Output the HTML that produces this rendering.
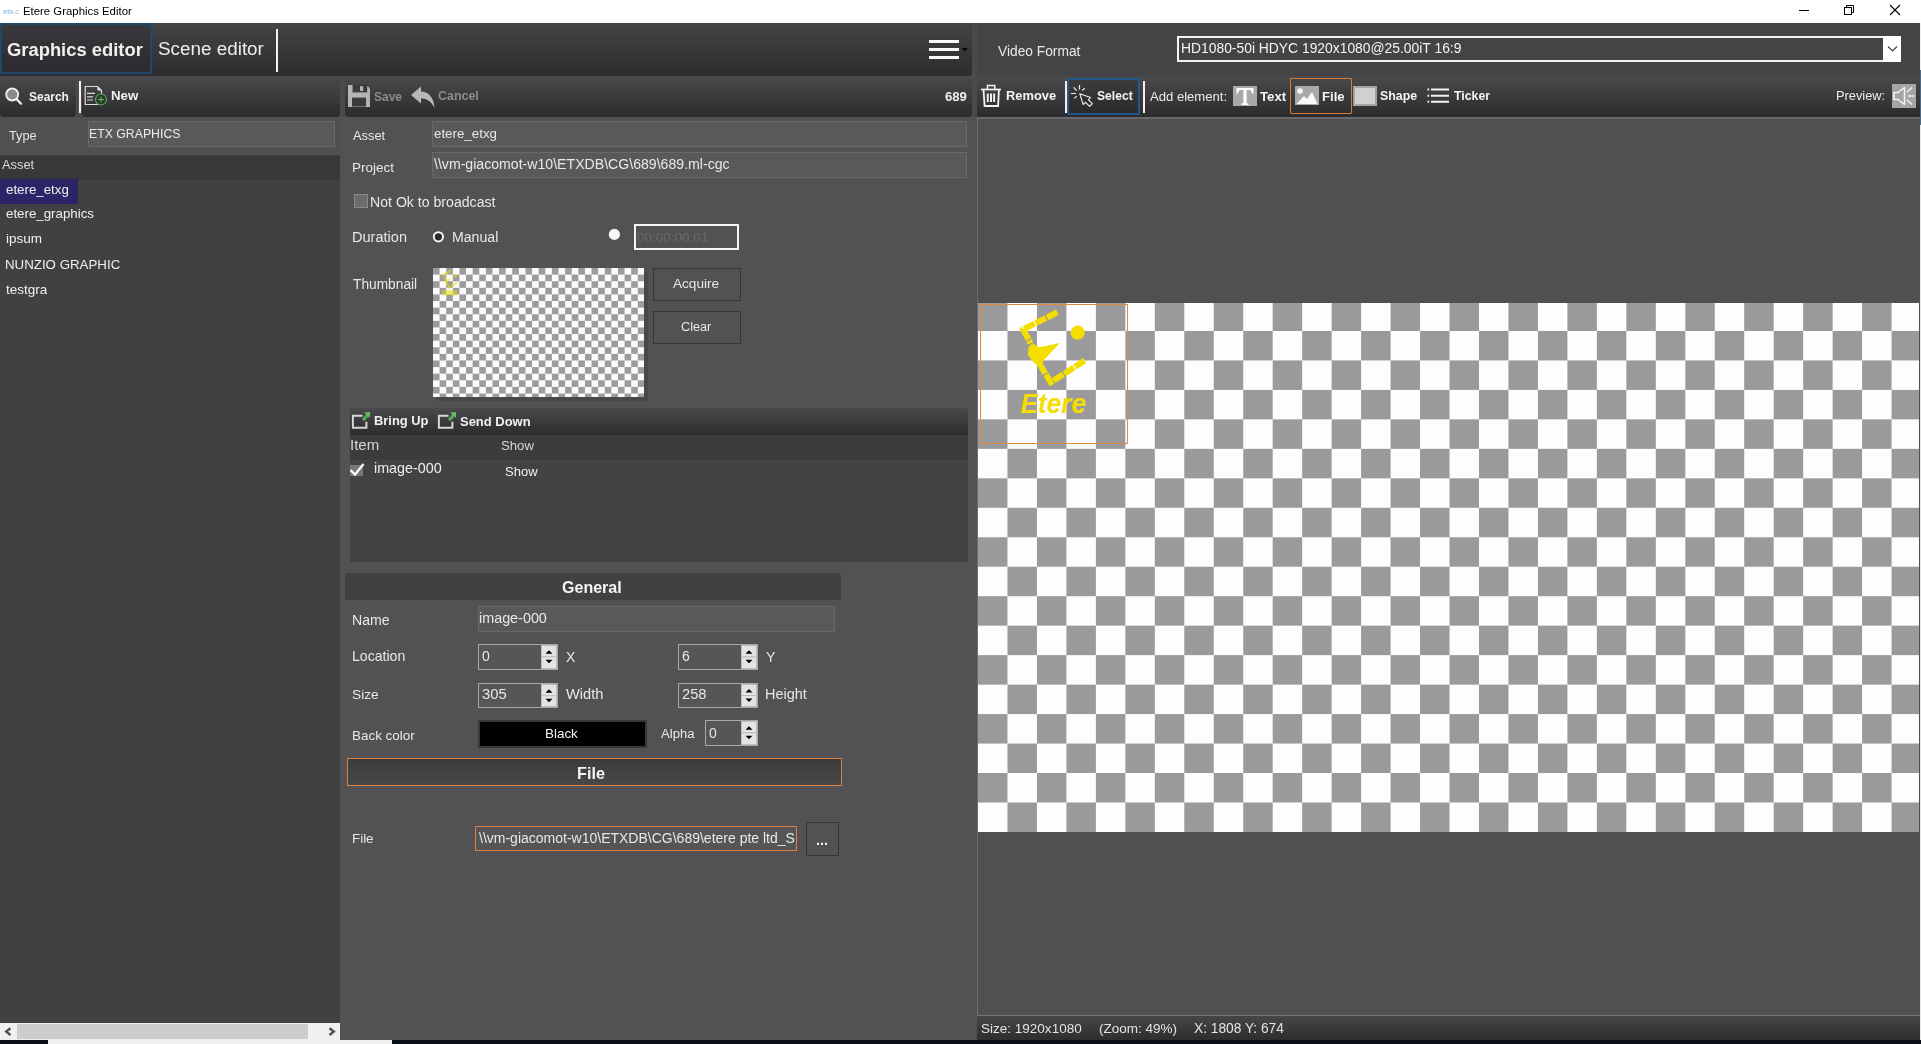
<!DOCTYPE html>
<html><head><meta charset="utf-8"><title>Etere Graphics Editor</title>
<style>
html,body{margin:0;padding:0}
body{width:1921px;height:1044px;position:relative;overflow:hidden;background:#4a494c;font-family:"Liberation Sans",sans-serif}
div,span,svg{position:absolute}
span{white-space:pre;line-height:1;will-change:transform}
</style></head><body>
<div style="left:0px;top:0px;width:1921px;height:23px;background:#ffffff"></div><svg style="position:absolute;left:0;top:0" width="1921" height="23"><text x="3" y="14" font-family="Liberation Sans" font-size="7" font-weight="bold" fill="#5ab0e0" opacity="0.7">etx</text><text x="13" y="14" font-family="Liberation Sans" font-size="7" fill="#a08aa0" opacity="0.6">-c</text><line x1="1799" y1="10.5" x2="1809" y2="10.5" stroke="#000" stroke-width="1"/><rect x="1844.5" y="7.5" width="7" height="7" fill="none" stroke="#000" stroke-width="1"/><path d="M1846.5 7.5 V5.5 H1853.5 V12.5 H1851.5" fill="none" stroke="#000" stroke-width="1"/><path d="M1890 5 L1900 15 M1900 5 L1890 15" stroke="#000" stroke-width="1.1"/></svg><div style="left:0px;top:23px;width:1921px;height:1017px;background:#4a494c"></div><div style="left:0px;top:23px;width:972px;height:53px;background:linear-gradient(#444346,#2c2b2e);border-radius:0 0 4px 0"></div><div style="left:0px;top:23px;width:152px;height:51px;box-sizing:border-box;border:2px solid #204868;background:linear-gradient(#39383b,#2b2a2e)"></div><div style="left:276px;top:29px;width:2px;height:43px;background:#f2f2f2"></div><div style="left:929px;top:39.5px;width:30px;height:3.0px;background:#fafafa;border-radius:0.5px"></div><div style="left:929px;top:47.5px;width:30px;height:3.0px;background:#fafafa;border-radius:0.5px"></div><div style="left:929px;top:55.5px;width:30px;height:3.0px;background:#fafafa;border-radius:0.5px"></div><svg style="left:960px;top:45px" width="10" height="8"><path d="M2 3 L7.6 3 L4.8 6.6 Z" fill="#000"/></svg><div style="left:977px;top:23px;width:943px;height:53px;background:#444346"></div><div style="left:1177px;top:36.2px;width:724px;height:26.199999999999996px;box-sizing:border-box;border:2px solid #f4f4f4;background:#444346"></div><div style="left:1883px;top:36.2px;width:18px;height:26.199999999999996px;background:#ffffff"></div><svg style="position:absolute;left:1886px;top:44px" width="14" height="10"><path d="M2 2.5 L6.5 7 L11 2.5" fill="none" stroke="#444" stroke-width="1.2"/></svg><div style="left:0px;top:76px;width:76px;height:41px;background:linear-gradient(#4a494c,#2c2b2e);border-radius:0 0 4px 4px"></div><div style="left:82px;top:76px;width:258px;height:41px;background:linear-gradient(#4a494c,#2c2b2e);border-radius:0 0 4px 4px"></div><div style="left:79px;top:81px;width:2px;height:32px;background:#f4f4f4"></div><div style="left:345px;top:76px;width:627px;height:41px;background:linear-gradient(#4a494c,#2c2b2e);border-radius:0 0 4px 4px"></div><div style="left:977px;top:76px;width:943px;height:41px;background:linear-gradient(#4a494c,#2c2b2e);"></div><svg style="position:absolute;left:0;top:76px" width="80" height="41"><circle cx="12.2" cy="18.5" r="6" fill="#8a898c" stroke="#f0f0f0" stroke-width="1.8"/><path d="M16.5 23 L21 27.8" stroke="#f0f0f0" stroke-width="2.2" stroke-linecap="round"/></svg><svg style="position:absolute;left:80px;top:76px" width="40" height="41"><path d="M5.2 10.5 H17.5 L21.5 14.5 V28.5 H5.2 Z" fill="none" stroke="#dcdcdc" stroke-width="1.2"/><path d="M17.5 10.5 V14.5 H21.5 Z" fill="#e8e8e8"/><path d="M7 17.3 H15 M7 20.8 H13 M7 24 H13" stroke="#dcdcdc" stroke-width="1.2"/><circle cx="21" cy="23.5" r="5.5" fill="#2c3a2c" stroke="#5aa05a" stroke-width="1.2"/><path d="M21 20.5 V26.5 M18 23.5 H24" stroke="#6ab06a" stroke-width="1"/></svg><svg style="position:absolute;left:345px;top:76px" width="140" height="41"><path d="M3 9 H21.5 L25 12.5 V31 H3 Z" fill="#b4b3b6"/><rect x="7.6" y="9" width="14.6" height="7.4" fill="#3a393c"/><rect x="15" y="10.2" width="3.2" height="4.8" fill="#b4b3b6"/><rect x="7" y="21.6" width="14" height="8.9" fill="#3a393c"/><path d="M66 19 L76 10.5 V15.5 C83 15.5 89 21 89.5 32 C86 25 82 22.5 76 22.5 V27.5 Z" fill="#b8b7ba"/></svg><svg style="left:977px;top:76px" width="30" height="41"><path d="M3.9 13.5 H24" stroke="#f4f4f4" stroke-width="1.7"/><path d="M10.5 13.5 V9.5 H17.7 V13.5" fill="none" stroke="#f4f4f4" stroke-width="1.5"/><path d="M6.5 13.5 L7.6 30 H21.1 L21.9 13.5" fill="none" stroke="#f4f4f4" stroke-width="1.8"/><path d="M10.8 17.5 V26.1 M14 17.5 V26.1 M17.1 17.5 V26.1" stroke="#f0f0f0" stroke-width="2"/></svg><div style="left:1067px;top:78px;width:73px;height:37px;box-sizing:border-box;border:2px solid #26578a;background:linear-gradient(#3c3b3e,#2a292c);border-radius:2px"></div><div style="left:1065px;top:81px;width:2px;height:32px;background:#f0f0f0"></div><div style="left:1143px;top:81px;width:2px;height:32px;background:#f0f0f0"></div><svg style="position:absolute;left:1067px;top:76px" width="32" height="41"><path d="M12.8 17.8 L23.5 21.5 L21.4 23.9 L25.4 27.6 L22.6 30.4 L18.6 26.4 L16.2 28.5 Z" fill="none" stroke="#f2f2f2" stroke-width="1.1" stroke-linejoin="round"/><path d="M12.5 8.9 V13.5 M6.7 11.4 L9.7 14.6 M3.9 17.5 H8.8 M7.3 22.4 L9.7 20.1 M17.7 12.1 L15.3 14.6" stroke="#f2f2f2" stroke-width="1.2"/></svg><div style="left:1233px;top:86px;width:24px;height:20px;background:#a9a8ab"></div><svg style="position:absolute;left:1233px;top:86px" width="24" height="20"><path d="M3.5 2 H20.5 V7.5 H19 C18.5 5 17.8 4 15.5 4 H13.6 V16.3 C13.6 17.3 14 17.6 15.5 17.6 V19 H8.5 V17.6 C10 17.6 10.4 17.3 10.4 16.3 V4 H8.5 C6.2 4 5.5 5 5 7.5 H3.5 Z" fill="#ffffff"/></svg><div style="left:1289.5px;top:78px;width:62.5px;height:36px;box-sizing:border-box;border:1.5px solid #d87a30;border-radius:1px"></div><div style="left:1295px;top:85.5px;width:24px;height:19.5px;background:#a9a8ab"></div><svg style="position:absolute;left:1295px;top:85.5px" width="24" height="20"><circle cx="5" cy="5" r="2.8" fill="#f4f4f4"/><path d="M1.5 18 L9 10 L12 13 L17 6 L22.5 18 Z" fill="#fafafa"/></svg><div style="left:1353px;top:86px;width:24px;height:20px;box-sizing:border-box;background:#d0d0d2;border:2px solid #a4a3a6"></div><svg style="position:absolute;left:1426px;top:86px" width="24" height="20"><path d="M1.5 3.6 H3.2 M1.5 9.7 H3.2 M1.5 15.8 H3.2" stroke="#f4f4f4" stroke-width="2"/><path d="M5 3.6 H23 M5 9.7 H23 M5 15.8 H23" stroke="#f4f4f4" stroke-width="2"/></svg><div style="left:1892px;top:83.7px;width:24px;height:24.299999999999997px;background:#a5a4a7"></div><svg style="position:absolute;left:1892px;top:83.7px" width="24" height="24.3"><path d="M2 8.5 H6 L12.5 3.5 V20.5 L6 15.5 H2 Z" fill="none" stroke="#f4f4f4" stroke-width="1.5" stroke-linejoin="round"/><path d="M15 8 L20 3.5 M16 12 H22.5 M15 16 L20 20.5" stroke="#f4f4f4" stroke-width="1.5"/></svg><div style="left:0px;top:117px;width:340px;height:38px;background:#504f52"></div><div style="left:87.5px;top:120.8px;width:247.5px;height:25.799999999999997px;box-sizing:border-box;background:#59585b;border:1px solid #69686b"></div><div style="left:0px;top:155px;width:340px;height:868px;background:#414043"></div><div style="left:0px;top:155.5px;width:340px;height:24.30000000000001px;background:#38373a"></div><div style="left:0px;top:179px;width:77.5px;height:24.5px;background:#2b2467"></div><div style="left:0px;top:1023px;width:340px;height:17px;background:#f0f0f0"></div><div style="left:17px;top:1024px;width:291px;height:15px;background:#cdcdcd"></div><svg style="position:absolute;left:0;top:1023px" width="340" height="17"><path d="M10.5 5.2 L6.2 8.6 L10.5 12" fill="none" stroke="#505050" stroke-width="2.4"/><path d="M329.5 5.2 L333.8 8.6 L329.5 12" fill="none" stroke="#505050" stroke-width="2.4"/></svg><div style="left:340px;top:117px;width:637px;height:923px;background:#525154"></div><div style="left:432px;top:121px;width:535px;height:26px;box-sizing:border-box;background:#59585b;border:1px solid #69686b"></div><div style="left:432px;top:152px;width:535px;height:26px;box-sizing:border-box;background:#59585b;border:1px solid #69686b"></div><div style="left:354px;top:194px;width:14px;height:14px;box-sizing:border-box;background:#6c6b6e;border:1px solid #8a898c"></div><svg style="position:absolute;left:425px;top:225px" width="200" height="25"><circle cx="13.4" cy="11.8" r="4.6" fill="#2a292c" stroke="#f4f4f4" stroke-width="2"/><circle cx="189.4" cy="9.4" r="5.6" fill="#f8f8f8"/></svg><div style="left:634px;top:224px;width:105px;height:26px;box-sizing:border-box;border:2px solid #f4f4f4;background:#525154"></div><div style="left:436px;top:272px;width:212px;height:129px;background:#48474a"></div><svg style="left:432.7px;top:268.1px;background:#fbfbfb" width="211.40000000000003" height="128.89999999999998"><g fill="#9c9b9e"><rect x="0.00" y="0.00" width="6.606" height="6.606"/><rect x="13.21" y="0.00" width="6.606" height="6.606"/><rect x="26.42" y="0.00" width="6.606" height="6.606"/><rect x="39.64" y="0.00" width="6.606" height="6.606"/><rect x="52.85" y="0.00" width="6.606" height="6.606"/><rect x="66.06" y="0.00" width="6.606" height="6.606"/><rect x="79.27" y="0.00" width="6.606" height="6.606"/><rect x="92.48" y="0.00" width="6.606" height="6.606"/><rect x="105.70" y="0.00" width="6.606" height="6.606"/><rect x="118.91" y="0.00" width="6.606" height="6.606"/><rect x="132.12" y="0.00" width="6.606" height="6.606"/><rect x="145.33" y="0.00" width="6.606" height="6.606"/><rect x="158.54" y="0.00" width="6.606" height="6.606"/><rect x="171.76" y="0.00" width="6.606" height="6.606"/><rect x="184.97" y="0.00" width="6.606" height="6.606"/><rect x="198.18" y="0.00" width="6.606" height="6.606"/><rect x="6.61" y="6.61" width="6.606" height="6.606"/><rect x="19.82" y="6.61" width="6.606" height="6.606"/><rect x="33.03" y="6.61" width="6.606" height="6.606"/><rect x="46.24" y="6.61" width="6.606" height="6.606"/><rect x="59.45" y="6.61" width="6.606" height="6.606"/><rect x="72.67" y="6.61" width="6.606" height="6.606"/><rect x="85.88" y="6.61" width="6.606" height="6.606"/><rect x="99.09" y="6.61" width="6.606" height="6.606"/><rect x="112.30" y="6.61" width="6.606" height="6.606"/><rect x="125.51" y="6.61" width="6.606" height="6.606"/><rect x="138.73" y="6.61" width="6.606" height="6.606"/><rect x="151.94" y="6.61" width="6.606" height="6.606"/><rect x="165.15" y="6.61" width="6.606" height="6.606"/><rect x="178.36" y="6.61" width="6.606" height="6.606"/><rect x="191.57" y="6.61" width="6.606" height="6.606"/><rect x="204.79" y="6.61" width="6.606" height="6.606"/><rect x="0.00" y="13.21" width="6.606" height="6.606"/><rect x="13.21" y="13.21" width="6.606" height="6.606"/><rect x="26.42" y="13.21" width="6.606" height="6.606"/><rect x="39.64" y="13.21" width="6.606" height="6.606"/><rect x="52.85" y="13.21" width="6.606" height="6.606"/><rect x="66.06" y="13.21" width="6.606" height="6.606"/><rect x="79.27" y="13.21" width="6.606" height="6.606"/><rect x="92.48" y="13.21" width="6.606" height="6.606"/><rect x="105.70" y="13.21" width="6.606" height="6.606"/><rect x="118.91" y="13.21" width="6.606" height="6.606"/><rect x="132.12" y="13.21" width="6.606" height="6.606"/><rect x="145.33" y="13.21" width="6.606" height="6.606"/><rect x="158.54" y="13.21" width="6.606" height="6.606"/><rect x="171.76" y="13.21" width="6.606" height="6.606"/><rect x="184.97" y="13.21" width="6.606" height="6.606"/><rect x="198.18" y="13.21" width="6.606" height="6.606"/><rect x="6.61" y="19.82" width="6.606" height="6.606"/><rect x="19.82" y="19.82" width="6.606" height="6.606"/><rect x="33.03" y="19.82" width="6.606" height="6.606"/><rect x="46.24" y="19.82" width="6.606" height="6.606"/><rect x="59.45" y="19.82" width="6.606" height="6.606"/><rect x="72.67" y="19.82" width="6.606" height="6.606"/><rect x="85.88" y="19.82" width="6.606" height="6.606"/><rect x="99.09" y="19.82" width="6.606" height="6.606"/><rect x="112.30" y="19.82" width="6.606" height="6.606"/><rect x="125.51" y="19.82" width="6.606" height="6.606"/><rect x="138.73" y="19.82" width="6.606" height="6.606"/><rect x="151.94" y="19.82" width="6.606" height="6.606"/><rect x="165.15" y="19.82" width="6.606" height="6.606"/><rect x="178.36" y="19.82" width="6.606" height="6.606"/><rect x="191.57" y="19.82" width="6.606" height="6.606"/><rect x="204.79" y="19.82" width="6.606" height="6.606"/><rect x="0.00" y="26.42" width="6.606" height="6.606"/><rect x="13.21" y="26.42" width="6.606" height="6.606"/><rect x="26.42" y="26.42" width="6.606" height="6.606"/><rect x="39.64" y="26.42" width="6.606" height="6.606"/><rect x="52.85" y="26.42" width="6.606" height="6.606"/><rect x="66.06" y="26.42" width="6.606" height="6.606"/><rect x="79.27" y="26.42" width="6.606" height="6.606"/><rect x="92.48" y="26.42" width="6.606" height="6.606"/><rect x="105.70" y="26.42" width="6.606" height="6.606"/><rect x="118.91" y="26.42" width="6.606" height="6.606"/><rect x="132.12" y="26.42" width="6.606" height="6.606"/><rect x="145.33" y="26.42" width="6.606" height="6.606"/><rect x="158.54" y="26.42" width="6.606" height="6.606"/><rect x="171.76" y="26.42" width="6.606" height="6.606"/><rect x="184.97" y="26.42" width="6.606" height="6.606"/><rect x="198.18" y="26.42" width="6.606" height="6.606"/><rect x="6.61" y="33.03" width="6.606" height="6.606"/><rect x="19.82" y="33.03" width="6.606" height="6.606"/><rect x="33.03" y="33.03" width="6.606" height="6.606"/><rect x="46.24" y="33.03" width="6.606" height="6.606"/><rect x="59.45" y="33.03" width="6.606" height="6.606"/><rect x="72.67" y="33.03" width="6.606" height="6.606"/><rect x="85.88" y="33.03" width="6.606" height="6.606"/><rect x="99.09" y="33.03" width="6.606" height="6.606"/><rect x="112.30" y="33.03" width="6.606" height="6.606"/><rect x="125.51" y="33.03" width="6.606" height="6.606"/><rect x="138.73" y="33.03" width="6.606" height="6.606"/><rect x="151.94" y="33.03" width="6.606" height="6.606"/><rect x="165.15" y="33.03" width="6.606" height="6.606"/><rect x="178.36" y="33.03" width="6.606" height="6.606"/><rect x="191.57" y="33.03" width="6.606" height="6.606"/><rect x="204.79" y="33.03" width="6.606" height="6.606"/><rect x="0.00" y="39.64" width="6.606" height="6.606"/><rect x="13.21" y="39.64" width="6.606" height="6.606"/><rect x="26.42" y="39.64" width="6.606" height="6.606"/><rect x="39.64" y="39.64" width="6.606" height="6.606"/><rect x="52.85" y="39.64" width="6.606" height="6.606"/><rect x="66.06" y="39.64" width="6.606" height="6.606"/><rect x="79.27" y="39.64" width="6.606" height="6.606"/><rect x="92.48" y="39.64" width="6.606" height="6.606"/><rect x="105.70" y="39.64" width="6.606" height="6.606"/><rect x="118.91" y="39.64" width="6.606" height="6.606"/><rect x="132.12" y="39.64" width="6.606" height="6.606"/><rect x="145.33" y="39.64" width="6.606" height="6.606"/><rect x="158.54" y="39.64" width="6.606" height="6.606"/><rect x="171.76" y="39.64" width="6.606" height="6.606"/><rect x="184.97" y="39.64" width="6.606" height="6.606"/><rect x="198.18" y="39.64" width="6.606" height="6.606"/><rect x="6.61" y="46.24" width="6.606" height="6.606"/><rect x="19.82" y="46.24" width="6.606" height="6.606"/><rect x="33.03" y="46.24" width="6.606" height="6.606"/><rect x="46.24" y="46.24" width="6.606" height="6.606"/><rect x="59.45" y="46.24" width="6.606" height="6.606"/><rect x="72.67" y="46.24" width="6.606" height="6.606"/><rect x="85.88" y="46.24" width="6.606" height="6.606"/><rect x="99.09" y="46.24" width="6.606" height="6.606"/><rect x="112.30" y="46.24" width="6.606" height="6.606"/><rect x="125.51" y="46.24" width="6.606" height="6.606"/><rect x="138.73" y="46.24" width="6.606" height="6.606"/><rect x="151.94" y="46.24" width="6.606" height="6.606"/><rect x="165.15" y="46.24" width="6.606" height="6.606"/><rect x="178.36" y="46.24" width="6.606" height="6.606"/><rect x="191.57" y="46.24" width="6.606" height="6.606"/><rect x="204.79" y="46.24" width="6.606" height="6.606"/><rect x="0.00" y="52.85" width="6.606" height="6.606"/><rect x="13.21" y="52.85" width="6.606" height="6.606"/><rect x="26.42" y="52.85" width="6.606" height="6.606"/><rect x="39.64" y="52.85" width="6.606" height="6.606"/><rect x="52.85" y="52.85" width="6.606" height="6.606"/><rect x="66.06" y="52.85" width="6.606" height="6.606"/><rect x="79.27" y="52.85" width="6.606" height="6.606"/><rect x="92.48" y="52.85" width="6.606" height="6.606"/><rect x="105.70" y="52.85" width="6.606" height="6.606"/><rect x="118.91" y="52.85" width="6.606" height="6.606"/><rect x="132.12" y="52.85" width="6.606" height="6.606"/><rect x="145.33" y="52.85" width="6.606" height="6.606"/><rect x="158.54" y="52.85" width="6.606" height="6.606"/><rect x="171.76" y="52.85" width="6.606" height="6.606"/><rect x="184.97" y="52.85" width="6.606" height="6.606"/><rect x="198.18" y="52.85" width="6.606" height="6.606"/><rect x="6.61" y="59.45" width="6.606" height="6.606"/><rect x="19.82" y="59.45" width="6.606" height="6.606"/><rect x="33.03" y="59.45" width="6.606" height="6.606"/><rect x="46.24" y="59.45" width="6.606" height="6.606"/><rect x="59.45" y="59.45" width="6.606" height="6.606"/><rect x="72.67" y="59.45" width="6.606" height="6.606"/><rect x="85.88" y="59.45" width="6.606" height="6.606"/><rect x="99.09" y="59.45" width="6.606" height="6.606"/><rect x="112.30" y="59.45" width="6.606" height="6.606"/><rect x="125.51" y="59.45" width="6.606" height="6.606"/><rect x="138.73" y="59.45" width="6.606" height="6.606"/><rect x="151.94" y="59.45" width="6.606" height="6.606"/><rect x="165.15" y="59.45" width="6.606" height="6.606"/><rect x="178.36" y="59.45" width="6.606" height="6.606"/><rect x="191.57" y="59.45" width="6.606" height="6.606"/><rect x="204.79" y="59.45" width="6.606" height="6.606"/><rect x="0.00" y="66.06" width="6.606" height="6.606"/><rect x="13.21" y="66.06" width="6.606" height="6.606"/><rect x="26.42" y="66.06" width="6.606" height="6.606"/><rect x="39.64" y="66.06" width="6.606" height="6.606"/><rect x="52.85" y="66.06" width="6.606" height="6.606"/><rect x="66.06" y="66.06" width="6.606" height="6.606"/><rect x="79.27" y="66.06" width="6.606" height="6.606"/><rect x="92.48" y="66.06" width="6.606" height="6.606"/><rect x="105.70" y="66.06" width="6.606" height="6.606"/><rect x="118.91" y="66.06" width="6.606" height="6.606"/><rect x="132.12" y="66.06" width="6.606" height="6.606"/><rect x="145.33" y="66.06" width="6.606" height="6.606"/><rect x="158.54" y="66.06" width="6.606" height="6.606"/><rect x="171.76" y="66.06" width="6.606" height="6.606"/><rect x="184.97" y="66.06" width="6.606" height="6.606"/><rect x="198.18" y="66.06" width="6.606" height="6.606"/><rect x="6.61" y="72.67" width="6.606" height="6.606"/><rect x="19.82" y="72.67" width="6.606" height="6.606"/><rect x="33.03" y="72.67" width="6.606" height="6.606"/><rect x="46.24" y="72.67" width="6.606" height="6.606"/><rect x="59.45" y="72.67" width="6.606" height="6.606"/><rect x="72.67" y="72.67" width="6.606" height="6.606"/><rect x="85.88" y="72.67" width="6.606" height="6.606"/><rect x="99.09" y="72.67" width="6.606" height="6.606"/><rect x="112.30" y="72.67" width="6.606" height="6.606"/><rect x="125.51" y="72.67" width="6.606" height="6.606"/><rect x="138.73" y="72.67" width="6.606" height="6.606"/><rect x="151.94" y="72.67" width="6.606" height="6.606"/><rect x="165.15" y="72.67" width="6.606" height="6.606"/><rect x="178.36" y="72.67" width="6.606" height="6.606"/><rect x="191.57" y="72.67" width="6.606" height="6.606"/><rect x="204.79" y="72.67" width="6.606" height="6.606"/><rect x="0.00" y="79.27" width="6.606" height="6.606"/><rect x="13.21" y="79.27" width="6.606" height="6.606"/><rect x="26.42" y="79.27" width="6.606" height="6.606"/><rect x="39.64" y="79.27" width="6.606" height="6.606"/><rect x="52.85" y="79.27" width="6.606" height="6.606"/><rect x="66.06" y="79.27" width="6.606" height="6.606"/><rect x="79.27" y="79.27" width="6.606" height="6.606"/><rect x="92.48" y="79.27" width="6.606" height="6.606"/><rect x="105.70" y="79.27" width="6.606" height="6.606"/><rect x="118.91" y="79.27" width="6.606" height="6.606"/><rect x="132.12" y="79.27" width="6.606" height="6.606"/><rect x="145.33" y="79.27" width="6.606" height="6.606"/><rect x="158.54" y="79.27" width="6.606" height="6.606"/><rect x="171.76" y="79.27" width="6.606" height="6.606"/><rect x="184.97" y="79.27" width="6.606" height="6.606"/><rect x="198.18" y="79.27" width="6.606" height="6.606"/><rect x="6.61" y="85.88" width="6.606" height="6.606"/><rect x="19.82" y="85.88" width="6.606" height="6.606"/><rect x="33.03" y="85.88" width="6.606" height="6.606"/><rect x="46.24" y="85.88" width="6.606" height="6.606"/><rect x="59.45" y="85.88" width="6.606" height="6.606"/><rect x="72.67" y="85.88" width="6.606" height="6.606"/><rect x="85.88" y="85.88" width="6.606" height="6.606"/><rect x="99.09" y="85.88" width="6.606" height="6.606"/><rect x="112.30" y="85.88" width="6.606" height="6.606"/><rect x="125.51" y="85.88" width="6.606" height="6.606"/><rect x="138.73" y="85.88" width="6.606" height="6.606"/><rect x="151.94" y="85.88" width="6.606" height="6.606"/><rect x="165.15" y="85.88" width="6.606" height="6.606"/><rect x="178.36" y="85.88" width="6.606" height="6.606"/><rect x="191.57" y="85.88" width="6.606" height="6.606"/><rect x="204.79" y="85.88" width="6.606" height="6.606"/><rect x="0.00" y="92.48" width="6.606" height="6.606"/><rect x="13.21" y="92.48" width="6.606" height="6.606"/><rect x="26.42" y="92.48" width="6.606" height="6.606"/><rect x="39.64" y="92.48" width="6.606" height="6.606"/><rect x="52.85" y="92.48" width="6.606" height="6.606"/><rect x="66.06" y="92.48" width="6.606" height="6.606"/><rect x="79.27" y="92.48" width="6.606" height="6.606"/><rect x="92.48" y="92.48" width="6.606" height="6.606"/><rect x="105.70" y="92.48" width="6.606" height="6.606"/><rect x="118.91" y="92.48" width="6.606" height="6.606"/><rect x="132.12" y="92.48" width="6.606" height="6.606"/><rect x="145.33" y="92.48" width="6.606" height="6.606"/><rect x="158.54" y="92.48" width="6.606" height="6.606"/><rect x="171.76" y="92.48" width="6.606" height="6.606"/><rect x="184.97" y="92.48" width="6.606" height="6.606"/><rect x="198.18" y="92.48" width="6.606" height="6.606"/><rect x="6.61" y="99.09" width="6.606" height="6.606"/><rect x="19.82" y="99.09" width="6.606" height="6.606"/><rect x="33.03" y="99.09" width="6.606" height="6.606"/><rect x="46.24" y="99.09" width="6.606" height="6.606"/><rect x="59.45" y="99.09" width="6.606" height="6.606"/><rect x="72.67" y="99.09" width="6.606" height="6.606"/><rect x="85.88" y="99.09" width="6.606" height="6.606"/><rect x="99.09" y="99.09" width="6.606" height="6.606"/><rect x="112.30" y="99.09" width="6.606" height="6.606"/><rect x="125.51" y="99.09" width="6.606" height="6.606"/><rect x="138.73" y="99.09" width="6.606" height="6.606"/><rect x="151.94" y="99.09" width="6.606" height="6.606"/><rect x="165.15" y="99.09" width="6.606" height="6.606"/><rect x="178.36" y="99.09" width="6.606" height="6.606"/><rect x="191.57" y="99.09" width="6.606" height="6.606"/><rect x="204.79" y="99.09" width="6.606" height="6.606"/><rect x="0.00" y="105.70" width="6.606" height="6.606"/><rect x="13.21" y="105.70" width="6.606" height="6.606"/><rect x="26.42" y="105.70" width="6.606" height="6.606"/><rect x="39.64" y="105.70" width="6.606" height="6.606"/><rect x="52.85" y="105.70" width="6.606" height="6.606"/><rect x="66.06" y="105.70" width="6.606" height="6.606"/><rect x="79.27" y="105.70" width="6.606" height="6.606"/><rect x="92.48" y="105.70" width="6.606" height="6.606"/><rect x="105.70" y="105.70" width="6.606" height="6.606"/><rect x="118.91" y="105.70" width="6.606" height="6.606"/><rect x="132.12" y="105.70" width="6.606" height="6.606"/><rect x="145.33" y="105.70" width="6.606" height="6.606"/><rect x="158.54" y="105.70" width="6.606" height="6.606"/><rect x="171.76" y="105.70" width="6.606" height="6.606"/><rect x="184.97" y="105.70" width="6.606" height="6.606"/><rect x="198.18" y="105.70" width="6.606" height="6.606"/><rect x="6.61" y="112.30" width="6.606" height="6.606"/><rect x="19.82" y="112.30" width="6.606" height="6.606"/><rect x="33.03" y="112.30" width="6.606" height="6.606"/><rect x="46.24" y="112.30" width="6.606" height="6.606"/><rect x="59.45" y="112.30" width="6.606" height="6.606"/><rect x="72.67" y="112.30" width="6.606" height="6.606"/><rect x="85.88" y="112.30" width="6.606" height="6.606"/><rect x="99.09" y="112.30" width="6.606" height="6.606"/><rect x="112.30" y="112.30" width="6.606" height="6.606"/><rect x="125.51" y="112.30" width="6.606" height="6.606"/><rect x="138.73" y="112.30" width="6.606" height="6.606"/><rect x="151.94" y="112.30" width="6.606" height="6.606"/><rect x="165.15" y="112.30" width="6.606" height="6.606"/><rect x="178.36" y="112.30" width="6.606" height="6.606"/><rect x="191.57" y="112.30" width="6.606" height="6.606"/><rect x="204.79" y="112.30" width="6.606" height="6.606"/><rect x="0.00" y="118.91" width="6.606" height="6.606"/><rect x="13.21" y="118.91" width="6.606" height="6.606"/><rect x="26.42" y="118.91" width="6.606" height="6.606"/><rect x="39.64" y="118.91" width="6.606" height="6.606"/><rect x="52.85" y="118.91" width="6.606" height="6.606"/><rect x="66.06" y="118.91" width="6.606" height="6.606"/><rect x="79.27" y="118.91" width="6.606" height="6.606"/><rect x="92.48" y="118.91" width="6.606" height="6.606"/><rect x="105.70" y="118.91" width="6.606" height="6.606"/><rect x="118.91" y="118.91" width="6.606" height="6.606"/><rect x="132.12" y="118.91" width="6.606" height="6.606"/><rect x="145.33" y="118.91" width="6.606" height="6.606"/><rect x="158.54" y="118.91" width="6.606" height="6.606"/><rect x="171.76" y="118.91" width="6.606" height="6.606"/><rect x="184.97" y="118.91" width="6.606" height="6.606"/><rect x="198.18" y="118.91" width="6.606" height="6.606"/><rect x="6.61" y="125.51" width="6.606" height="6.606"/><rect x="19.82" y="125.51" width="6.606" height="6.606"/><rect x="33.03" y="125.51" width="6.606" height="6.606"/><rect x="46.24" y="125.51" width="6.606" height="6.606"/><rect x="59.45" y="125.51" width="6.606" height="6.606"/><rect x="72.67" y="125.51" width="6.606" height="6.606"/><rect x="85.88" y="125.51" width="6.606" height="6.606"/><rect x="99.09" y="125.51" width="6.606" height="6.606"/><rect x="112.30" y="125.51" width="6.606" height="6.606"/><rect x="125.51" y="125.51" width="6.606" height="6.606"/><rect x="138.73" y="125.51" width="6.606" height="6.606"/><rect x="151.94" y="125.51" width="6.606" height="6.606"/><rect x="165.15" y="125.51" width="6.606" height="6.606"/><rect x="178.36" y="125.51" width="6.606" height="6.606"/><rect x="191.57" y="125.51" width="6.606" height="6.606"/><rect x="204.79" y="125.51" width="6.606" height="6.606"/></g></svg><svg style="left:432.7px;top:268.1px" width="40" height="40"><g opacity="0.55" transform="scale(0.2242,0.2434) translate(0,1.5)"><g fill="none" stroke="#e8e000" stroke-width="9"><path d="M79.3 9.3 L45.1 26.4 L52.5 40.3"/><path d="M61.4 60.6 L72.8 79.4 L107 57.4"/></g><path d="M50.4 44.3 L54.5 40.3 L61.4 44.3 L81.8 39.9 L65.5 57.4 L63.9 63.1 L56.5 60.6 L50 52.5 Z" fill="#e8e000"/><circle cx="99.7" cy="29.7" r="8" fill="#e8e000"/><rect x="42" y="90" width="66" height="21" fill="#e8e000"/></g></svg><div style="left:653px;top:267.5px;width:88px;height:33.0px;box-sizing:border-box;border:1px solid #363538;background:#525154"></div><div style="left:653px;top:310.5px;width:88px;height:33.0px;box-sizing:border-box;border:1px solid #363538;background:#525154"></div><div style="left:349.5px;top:408px;width:618.5px;height:26.5px;background:linear-gradient(#4a494c,#2c2b2e);border-radius:3px 3px 0 0"></div><svg style="left:349px;top:408px" width="110" height="27"><path d="M13.5 7.8 H3.9 V19.8 H17.4 V13.8" fill="none" stroke="#d6d6d6" stroke-width="2"/><path d="M14 12.2 L18.6 7.2" stroke="#55a855" stroke-width="3.2"/><path d="M15 4.6 L21.2 4 L20.8 10 Z" fill="#66bb66"/><path d="M99.5 7.8 H89.9 V19.8 H103.4 V13.8" fill="none" stroke="#d6d6d6" stroke-width="2"/><path d="M100 12.2 L104.6 7.2" stroke="#55a855" stroke-width="3.2"/><path d="M101 4.6 L107.2 4 L106.8 10 Z" fill="#66bb66"/></svg><div style="left:349.5px;top:434.5px;width:618.5px;height:127.5px;background:#434245"></div><div style="left:349.5px;top:434.5px;width:618.5px;height:25.5px;background:#3c3b3e"></div><div style="left:350px;top:465px;width:13px;height:11px;background:#77767a"></div><svg style="position:absolute;left:348px;top:460px" width="20" height="20"><path d="M2.5 10 L7 14.5 L15.5 4" fill="none" stroke="#ffffff" stroke-width="2.2"/></svg><div style="left:345px;top:572.5px;width:496px;height:27.5px;background:#414043;border-radius:3px 3px 0 0"></div><div style="left:478px;top:606px;width:357px;height:26px;box-sizing:border-box;background:#59585b;border:1px solid #69686b"></div><div style="left:478px;top:644.3px;width:80px;height:25.5px;box-sizing:border-box;background:#565558;border:1px solid #a9a8ab"></div><div style="left:541px;top:645.3px;width:16px;height:23.5px;box-sizing:border-box;background:#e4e4e4;border:1px solid #bcbcbc"></div><svg style="position:absolute;left:541px;top:644.3px" width="16" height="25.5"><path d="M4.5 9.75 L8 6.25 L11.5 9.75 Z" fill="#000"/><path d="M4.5 15.75 L8 19.25 L11.5 15.75 Z" fill="#000"/><path d="M1 12.75 H15" stroke="#b8b8b8" stroke-width="1"/></svg><div style="left:678px;top:644px;width:80px;height:25.700000000000045px;box-sizing:border-box;background:#565558;border:1px solid #a9a8ab"></div><div style="left:741px;top:645px;width:16px;height:23.700000000000045px;box-sizing:border-box;background:#e4e4e4;border:1px solid #bcbcbc"></div><svg style="position:absolute;left:741px;top:644px" width="16" height="25.700000000000045"><path d="M4.5 9.850000000000023 L8 6.350000000000023 L11.5 9.850000000000023 Z" fill="#000"/><path d="M4.5 15.850000000000023 L8 19.350000000000023 L11.5 15.850000000000023 Z" fill="#000"/><path d="M1 12.850000000000023 H15" stroke="#b8b8b8" stroke-width="1"/></svg><div style="left:478px;top:682.5px;width:80px;height:25.5px;box-sizing:border-box;background:#565558;border:1px solid #a9a8ab"></div><div style="left:541px;top:683.5px;width:16px;height:23.5px;box-sizing:border-box;background:#e4e4e4;border:1px solid #bcbcbc"></div><svg style="position:absolute;left:541px;top:682.5px" width="16" height="25.5"><path d="M4.5 9.75 L8 6.25 L11.5 9.75 Z" fill="#000"/><path d="M4.5 15.75 L8 19.25 L11.5 15.75 Z" fill="#000"/><path d="M1 12.75 H15" stroke="#b8b8b8" stroke-width="1"/></svg><div style="left:678px;top:682.5px;width:80px;height:25.0px;box-sizing:border-box;background:#565558;border:1px solid #a9a8ab"></div><div style="left:741px;top:683.5px;width:16px;height:23.0px;box-sizing:border-box;background:#e4e4e4;border:1px solid #bcbcbc"></div><svg style="position:absolute;left:741px;top:682.5px" width="16" height="25.0"><path d="M4.5 9.5 L8 6.0 L11.5 9.5 Z" fill="#000"/><path d="M4.5 15.5 L8 19.0 L11.5 15.5 Z" fill="#000"/><path d="M1 12.5 H15" stroke="#b8b8b8" stroke-width="1"/></svg><div style="left:478px;top:720.3px;width:168.70000000000005px;height:28.0px;box-sizing:border-box;background:#000;border:2.5px solid #38373a"></div><div style="left:705.3px;top:720.3px;width:52.700000000000045px;height:25.40000000000009px;box-sizing:border-box;background:#565558;border:1px solid #a9a8ab"></div><div style="left:741px;top:721.3px;width:16px;height:23.40000000000009px;box-sizing:border-box;background:#e4e4e4;border:1px solid #bcbcbc"></div><svg style="position:absolute;left:741px;top:720.3px" width="16" height="25.40000000000009"><path d="M4.5 9.700000000000045 L8 6.2000000000000455 L11.5 9.700000000000045 Z" fill="#000"/><path d="M4.5 15.700000000000045 L8 19.200000000000045 L11.5 15.700000000000045 Z" fill="#000"/><path d="M1 12.700000000000045 H15" stroke="#b8b8b8" stroke-width="1"/></svg><div style="left:347px;top:758.3px;width:495px;height:27.40000000000009px;box-sizing:border-box;border:1.5px solid #e07f3a;background:linear-gradient(#3c3b3e,#48474a)"></div><div style="left:474.8px;top:826.2px;width:322.2px;height:25.0px;box-sizing:border-box;border:1.5px solid #e0803c;background:#555457"></div><div style="left:806px;top:822.4px;width:33px;height:33.30000000000007px;box-sizing:border-box;border:1px solid #363538;background:#525154"></div><div style="left:977px;top:117px;width:943px;height:899px;background:#514f52"></div><div style="left:977px;top:117px;width:943px;height:1.5px;background:#69686b"></div><div style="left:977px;top:117px;width:1px;height:899px;background:#6c6b6e"></div><svg style="left:978px;top:303px;background:#fdfdff" width="941" height="529"><g fill="#9a999c"><rect x="0.00" y="-1.50" width="29.470" height="29.470"/><rect x="58.94" y="-1.50" width="29.470" height="29.470"/><rect x="117.88" y="-1.50" width="29.470" height="29.470"/><rect x="176.82" y="-1.50" width="29.470" height="29.470"/><rect x="235.76" y="-1.50" width="29.470" height="29.470"/><rect x="294.70" y="-1.50" width="29.470" height="29.470"/><rect x="353.64" y="-1.50" width="29.470" height="29.470"/><rect x="412.58" y="-1.50" width="29.470" height="29.470"/><rect x="471.52" y="-1.50" width="29.470" height="29.470"/><rect x="530.46" y="-1.50" width="29.470" height="29.470"/><rect x="589.40" y="-1.50" width="29.470" height="29.470"/><rect x="648.34" y="-1.50" width="29.470" height="29.470"/><rect x="707.28" y="-1.50" width="29.470" height="29.470"/><rect x="766.22" y="-1.50" width="29.470" height="29.470"/><rect x="825.16" y="-1.50" width="29.470" height="29.470"/><rect x="884.10" y="-1.50" width="29.470" height="29.470"/><rect x="29.47" y="27.97" width="29.470" height="29.470"/><rect x="88.41" y="27.97" width="29.470" height="29.470"/><rect x="147.35" y="27.97" width="29.470" height="29.470"/><rect x="206.29" y="27.97" width="29.470" height="29.470"/><rect x="265.23" y="27.97" width="29.470" height="29.470"/><rect x="324.17" y="27.97" width="29.470" height="29.470"/><rect x="383.11" y="27.97" width="29.470" height="29.470"/><rect x="442.05" y="27.97" width="29.470" height="29.470"/><rect x="500.99" y="27.97" width="29.470" height="29.470"/><rect x="559.93" y="27.97" width="29.470" height="29.470"/><rect x="618.87" y="27.97" width="29.470" height="29.470"/><rect x="677.81" y="27.97" width="29.470" height="29.470"/><rect x="736.75" y="27.97" width="29.470" height="29.470"/><rect x="795.69" y="27.97" width="29.470" height="29.470"/><rect x="854.63" y="27.97" width="29.470" height="29.470"/><rect x="913.57" y="27.97" width="29.470" height="29.470"/><rect x="0.00" y="57.44" width="29.470" height="29.470"/><rect x="58.94" y="57.44" width="29.470" height="29.470"/><rect x="117.88" y="57.44" width="29.470" height="29.470"/><rect x="176.82" y="57.44" width="29.470" height="29.470"/><rect x="235.76" y="57.44" width="29.470" height="29.470"/><rect x="294.70" y="57.44" width="29.470" height="29.470"/><rect x="353.64" y="57.44" width="29.470" height="29.470"/><rect x="412.58" y="57.44" width="29.470" height="29.470"/><rect x="471.52" y="57.44" width="29.470" height="29.470"/><rect x="530.46" y="57.44" width="29.470" height="29.470"/><rect x="589.40" y="57.44" width="29.470" height="29.470"/><rect x="648.34" y="57.44" width="29.470" height="29.470"/><rect x="707.28" y="57.44" width="29.470" height="29.470"/><rect x="766.22" y="57.44" width="29.470" height="29.470"/><rect x="825.16" y="57.44" width="29.470" height="29.470"/><rect x="884.10" y="57.44" width="29.470" height="29.470"/><rect x="29.47" y="86.91" width="29.470" height="29.470"/><rect x="88.41" y="86.91" width="29.470" height="29.470"/><rect x="147.35" y="86.91" width="29.470" height="29.470"/><rect x="206.29" y="86.91" width="29.470" height="29.470"/><rect x="265.23" y="86.91" width="29.470" height="29.470"/><rect x="324.17" y="86.91" width="29.470" height="29.470"/><rect x="383.11" y="86.91" width="29.470" height="29.470"/><rect x="442.05" y="86.91" width="29.470" height="29.470"/><rect x="500.99" y="86.91" width="29.470" height="29.470"/><rect x="559.93" y="86.91" width="29.470" height="29.470"/><rect x="618.87" y="86.91" width="29.470" height="29.470"/><rect x="677.81" y="86.91" width="29.470" height="29.470"/><rect x="736.75" y="86.91" width="29.470" height="29.470"/><rect x="795.69" y="86.91" width="29.470" height="29.470"/><rect x="854.63" y="86.91" width="29.470" height="29.470"/><rect x="913.57" y="86.91" width="29.470" height="29.470"/><rect x="0.00" y="116.38" width="29.470" height="29.470"/><rect x="58.94" y="116.38" width="29.470" height="29.470"/><rect x="117.88" y="116.38" width="29.470" height="29.470"/><rect x="176.82" y="116.38" width="29.470" height="29.470"/><rect x="235.76" y="116.38" width="29.470" height="29.470"/><rect x="294.70" y="116.38" width="29.470" height="29.470"/><rect x="353.64" y="116.38" width="29.470" height="29.470"/><rect x="412.58" y="116.38" width="29.470" height="29.470"/><rect x="471.52" y="116.38" width="29.470" height="29.470"/><rect x="530.46" y="116.38" width="29.470" height="29.470"/><rect x="589.40" y="116.38" width="29.470" height="29.470"/><rect x="648.34" y="116.38" width="29.470" height="29.470"/><rect x="707.28" y="116.38" width="29.470" height="29.470"/><rect x="766.22" y="116.38" width="29.470" height="29.470"/><rect x="825.16" y="116.38" width="29.470" height="29.470"/><rect x="884.10" y="116.38" width="29.470" height="29.470"/><rect x="29.47" y="145.85" width="29.470" height="29.470"/><rect x="88.41" y="145.85" width="29.470" height="29.470"/><rect x="147.35" y="145.85" width="29.470" height="29.470"/><rect x="206.29" y="145.85" width="29.470" height="29.470"/><rect x="265.23" y="145.85" width="29.470" height="29.470"/><rect x="324.17" y="145.85" width="29.470" height="29.470"/><rect x="383.11" y="145.85" width="29.470" height="29.470"/><rect x="442.05" y="145.85" width="29.470" height="29.470"/><rect x="500.99" y="145.85" width="29.470" height="29.470"/><rect x="559.93" y="145.85" width="29.470" height="29.470"/><rect x="618.87" y="145.85" width="29.470" height="29.470"/><rect x="677.81" y="145.85" width="29.470" height="29.470"/><rect x="736.75" y="145.85" width="29.470" height="29.470"/><rect x="795.69" y="145.85" width="29.470" height="29.470"/><rect x="854.63" y="145.85" width="29.470" height="29.470"/><rect x="913.57" y="145.85" width="29.470" height="29.470"/><rect x="0.00" y="175.32" width="29.470" height="29.470"/><rect x="58.94" y="175.32" width="29.470" height="29.470"/><rect x="117.88" y="175.32" width="29.470" height="29.470"/><rect x="176.82" y="175.32" width="29.470" height="29.470"/><rect x="235.76" y="175.32" width="29.470" height="29.470"/><rect x="294.70" y="175.32" width="29.470" height="29.470"/><rect x="353.64" y="175.32" width="29.470" height="29.470"/><rect x="412.58" y="175.32" width="29.470" height="29.470"/><rect x="471.52" y="175.32" width="29.470" height="29.470"/><rect x="530.46" y="175.32" width="29.470" height="29.470"/><rect x="589.40" y="175.32" width="29.470" height="29.470"/><rect x="648.34" y="175.32" width="29.470" height="29.470"/><rect x="707.28" y="175.32" width="29.470" height="29.470"/><rect x="766.22" y="175.32" width="29.470" height="29.470"/><rect x="825.16" y="175.32" width="29.470" height="29.470"/><rect x="884.10" y="175.32" width="29.470" height="29.470"/><rect x="29.47" y="204.79" width="29.470" height="29.470"/><rect x="88.41" y="204.79" width="29.470" height="29.470"/><rect x="147.35" y="204.79" width="29.470" height="29.470"/><rect x="206.29" y="204.79" width="29.470" height="29.470"/><rect x="265.23" y="204.79" width="29.470" height="29.470"/><rect x="324.17" y="204.79" width="29.470" height="29.470"/><rect x="383.11" y="204.79" width="29.470" height="29.470"/><rect x="442.05" y="204.79" width="29.470" height="29.470"/><rect x="500.99" y="204.79" width="29.470" height="29.470"/><rect x="559.93" y="204.79" width="29.470" height="29.470"/><rect x="618.87" y="204.79" width="29.470" height="29.470"/><rect x="677.81" y="204.79" width="29.470" height="29.470"/><rect x="736.75" y="204.79" width="29.470" height="29.470"/><rect x="795.69" y="204.79" width="29.470" height="29.470"/><rect x="854.63" y="204.79" width="29.470" height="29.470"/><rect x="913.57" y="204.79" width="29.470" height="29.470"/><rect x="0.00" y="234.26" width="29.470" height="29.470"/><rect x="58.94" y="234.26" width="29.470" height="29.470"/><rect x="117.88" y="234.26" width="29.470" height="29.470"/><rect x="176.82" y="234.26" width="29.470" height="29.470"/><rect x="235.76" y="234.26" width="29.470" height="29.470"/><rect x="294.70" y="234.26" width="29.470" height="29.470"/><rect x="353.64" y="234.26" width="29.470" height="29.470"/><rect x="412.58" y="234.26" width="29.470" height="29.470"/><rect x="471.52" y="234.26" width="29.470" height="29.470"/><rect x="530.46" y="234.26" width="29.470" height="29.470"/><rect x="589.40" y="234.26" width="29.470" height="29.470"/><rect x="648.34" y="234.26" width="29.470" height="29.470"/><rect x="707.28" y="234.26" width="29.470" height="29.470"/><rect x="766.22" y="234.26" width="29.470" height="29.470"/><rect x="825.16" y="234.26" width="29.470" height="29.470"/><rect x="884.10" y="234.26" width="29.470" height="29.470"/><rect x="29.47" y="263.73" width="29.470" height="29.470"/><rect x="88.41" y="263.73" width="29.470" height="29.470"/><rect x="147.35" y="263.73" width="29.470" height="29.470"/><rect x="206.29" y="263.73" width="29.470" height="29.470"/><rect x="265.23" y="263.73" width="29.470" height="29.470"/><rect x="324.17" y="263.73" width="29.470" height="29.470"/><rect x="383.11" y="263.73" width="29.470" height="29.470"/><rect x="442.05" y="263.73" width="29.470" height="29.470"/><rect x="500.99" y="263.73" width="29.470" height="29.470"/><rect x="559.93" y="263.73" width="29.470" height="29.470"/><rect x="618.87" y="263.73" width="29.470" height="29.470"/><rect x="677.81" y="263.73" width="29.470" height="29.470"/><rect x="736.75" y="263.73" width="29.470" height="29.470"/><rect x="795.69" y="263.73" width="29.470" height="29.470"/><rect x="854.63" y="263.73" width="29.470" height="29.470"/><rect x="913.57" y="263.73" width="29.470" height="29.470"/><rect x="0.00" y="293.20" width="29.470" height="29.470"/><rect x="58.94" y="293.20" width="29.470" height="29.470"/><rect x="117.88" y="293.20" width="29.470" height="29.470"/><rect x="176.82" y="293.20" width="29.470" height="29.470"/><rect x="235.76" y="293.20" width="29.470" height="29.470"/><rect x="294.70" y="293.20" width="29.470" height="29.470"/><rect x="353.64" y="293.20" width="29.470" height="29.470"/><rect x="412.58" y="293.20" width="29.470" height="29.470"/><rect x="471.52" y="293.20" width="29.470" height="29.470"/><rect x="530.46" y="293.20" width="29.470" height="29.470"/><rect x="589.40" y="293.20" width="29.470" height="29.470"/><rect x="648.34" y="293.20" width="29.470" height="29.470"/><rect x="707.28" y="293.20" width="29.470" height="29.470"/><rect x="766.22" y="293.20" width="29.470" height="29.470"/><rect x="825.16" y="293.20" width="29.470" height="29.470"/><rect x="884.10" y="293.20" width="29.470" height="29.470"/><rect x="29.47" y="322.67" width="29.470" height="29.470"/><rect x="88.41" y="322.67" width="29.470" height="29.470"/><rect x="147.35" y="322.67" width="29.470" height="29.470"/><rect x="206.29" y="322.67" width="29.470" height="29.470"/><rect x="265.23" y="322.67" width="29.470" height="29.470"/><rect x="324.17" y="322.67" width="29.470" height="29.470"/><rect x="383.11" y="322.67" width="29.470" height="29.470"/><rect x="442.05" y="322.67" width="29.470" height="29.470"/><rect x="500.99" y="322.67" width="29.470" height="29.470"/><rect x="559.93" y="322.67" width="29.470" height="29.470"/><rect x="618.87" y="322.67" width="29.470" height="29.470"/><rect x="677.81" y="322.67" width="29.470" height="29.470"/><rect x="736.75" y="322.67" width="29.470" height="29.470"/><rect x="795.69" y="322.67" width="29.470" height="29.470"/><rect x="854.63" y="322.67" width="29.470" height="29.470"/><rect x="913.57" y="322.67" width="29.470" height="29.470"/><rect x="0.00" y="352.14" width="29.470" height="29.470"/><rect x="58.94" y="352.14" width="29.470" height="29.470"/><rect x="117.88" y="352.14" width="29.470" height="29.470"/><rect x="176.82" y="352.14" width="29.470" height="29.470"/><rect x="235.76" y="352.14" width="29.470" height="29.470"/><rect x="294.70" y="352.14" width="29.470" height="29.470"/><rect x="353.64" y="352.14" width="29.470" height="29.470"/><rect x="412.58" y="352.14" width="29.470" height="29.470"/><rect x="471.52" y="352.14" width="29.470" height="29.470"/><rect x="530.46" y="352.14" width="29.470" height="29.470"/><rect x="589.40" y="352.14" width="29.470" height="29.470"/><rect x="648.34" y="352.14" width="29.470" height="29.470"/><rect x="707.28" y="352.14" width="29.470" height="29.470"/><rect x="766.22" y="352.14" width="29.470" height="29.470"/><rect x="825.16" y="352.14" width="29.470" height="29.470"/><rect x="884.10" y="352.14" width="29.470" height="29.470"/><rect x="29.47" y="381.61" width="29.470" height="29.470"/><rect x="88.41" y="381.61" width="29.470" height="29.470"/><rect x="147.35" y="381.61" width="29.470" height="29.470"/><rect x="206.29" y="381.61" width="29.470" height="29.470"/><rect x="265.23" y="381.61" width="29.470" height="29.470"/><rect x="324.17" y="381.61" width="29.470" height="29.470"/><rect x="383.11" y="381.61" width="29.470" height="29.470"/><rect x="442.05" y="381.61" width="29.470" height="29.470"/><rect x="500.99" y="381.61" width="29.470" height="29.470"/><rect x="559.93" y="381.61" width="29.470" height="29.470"/><rect x="618.87" y="381.61" width="29.470" height="29.470"/><rect x="677.81" y="381.61" width="29.470" height="29.470"/><rect x="736.75" y="381.61" width="29.470" height="29.470"/><rect x="795.69" y="381.61" width="29.470" height="29.470"/><rect x="854.63" y="381.61" width="29.470" height="29.470"/><rect x="913.57" y="381.61" width="29.470" height="29.470"/><rect x="0.00" y="411.08" width="29.470" height="29.470"/><rect x="58.94" y="411.08" width="29.470" height="29.470"/><rect x="117.88" y="411.08" width="29.470" height="29.470"/><rect x="176.82" y="411.08" width="29.470" height="29.470"/><rect x="235.76" y="411.08" width="29.470" height="29.470"/><rect x="294.70" y="411.08" width="29.470" height="29.470"/><rect x="353.64" y="411.08" width="29.470" height="29.470"/><rect x="412.58" y="411.08" width="29.470" height="29.470"/><rect x="471.52" y="411.08" width="29.470" height="29.470"/><rect x="530.46" y="411.08" width="29.470" height="29.470"/><rect x="589.40" y="411.08" width="29.470" height="29.470"/><rect x="648.34" y="411.08" width="29.470" height="29.470"/><rect x="707.28" y="411.08" width="29.470" height="29.470"/><rect x="766.22" y="411.08" width="29.470" height="29.470"/><rect x="825.16" y="411.08" width="29.470" height="29.470"/><rect x="884.10" y="411.08" width="29.470" height="29.470"/><rect x="29.47" y="440.55" width="29.470" height="29.470"/><rect x="88.41" y="440.55" width="29.470" height="29.470"/><rect x="147.35" y="440.55" width="29.470" height="29.470"/><rect x="206.29" y="440.55" width="29.470" height="29.470"/><rect x="265.23" y="440.55" width="29.470" height="29.470"/><rect x="324.17" y="440.55" width="29.470" height="29.470"/><rect x="383.11" y="440.55" width="29.470" height="29.470"/><rect x="442.05" y="440.55" width="29.470" height="29.470"/><rect x="500.99" y="440.55" width="29.470" height="29.470"/><rect x="559.93" y="440.55" width="29.470" height="29.470"/><rect x="618.87" y="440.55" width="29.470" height="29.470"/><rect x="677.81" y="440.55" width="29.470" height="29.470"/><rect x="736.75" y="440.55" width="29.470" height="29.470"/><rect x="795.69" y="440.55" width="29.470" height="29.470"/><rect x="854.63" y="440.55" width="29.470" height="29.470"/><rect x="913.57" y="440.55" width="29.470" height="29.470"/><rect x="0.00" y="470.02" width="29.470" height="29.470"/><rect x="58.94" y="470.02" width="29.470" height="29.470"/><rect x="117.88" y="470.02" width="29.470" height="29.470"/><rect x="176.82" y="470.02" width="29.470" height="29.470"/><rect x="235.76" y="470.02" width="29.470" height="29.470"/><rect x="294.70" y="470.02" width="29.470" height="29.470"/><rect x="353.64" y="470.02" width="29.470" height="29.470"/><rect x="412.58" y="470.02" width="29.470" height="29.470"/><rect x="471.52" y="470.02" width="29.470" height="29.470"/><rect x="530.46" y="470.02" width="29.470" height="29.470"/><rect x="589.40" y="470.02" width="29.470" height="29.470"/><rect x="648.34" y="470.02" width="29.470" height="29.470"/><rect x="707.28" y="470.02" width="29.470" height="29.470"/><rect x="766.22" y="470.02" width="29.470" height="29.470"/><rect x="825.16" y="470.02" width="29.470" height="29.470"/><rect x="884.10" y="470.02" width="29.470" height="29.470"/><rect x="29.47" y="499.49" width="29.470" height="29.470"/><rect x="88.41" y="499.49" width="29.470" height="29.470"/><rect x="147.35" y="499.49" width="29.470" height="29.470"/><rect x="206.29" y="499.49" width="29.470" height="29.470"/><rect x="265.23" y="499.49" width="29.470" height="29.470"/><rect x="324.17" y="499.49" width="29.470" height="29.470"/><rect x="383.11" y="499.49" width="29.470" height="29.470"/><rect x="442.05" y="499.49" width="29.470" height="29.470"/><rect x="500.99" y="499.49" width="29.470" height="29.470"/><rect x="559.93" y="499.49" width="29.470" height="29.470"/><rect x="618.87" y="499.49" width="29.470" height="29.470"/><rect x="677.81" y="499.49" width="29.470" height="29.470"/><rect x="736.75" y="499.49" width="29.470" height="29.470"/><rect x="795.69" y="499.49" width="29.470" height="29.470"/><rect x="854.63" y="499.49" width="29.470" height="29.470"/><rect x="913.57" y="499.49" width="29.470" height="29.470"/></g></svg><svg style="left:978px;top:303px" width="150" height="145"><g fill="none" stroke="#f4dd00" stroke-width="6" stroke-dasharray="11.5 1.2"><path d="M79.3 9.3 L45.1 26.4 L52.5 40.3"/><path d="M61.4 60.6 L72.8 79.4 L107 57.4"/></g><path d="M50.4 44.3 L54.5 40.3 L61.4 44.3 L81.8 39.9 L65.5 57.4 L63.9 63.1 L56.5 60.6 L50 52.5 Z" fill="#f4dd00"/><circle cx="99.7" cy="29.7" r="7.1" fill="#f4dd00"/><text x="42.5" y="110.3" font-family="Liberation Sans" font-weight="bold" font-style="italic" font-size="27" fill="#f4dd00" textLength="65.5" lengthAdjust="spacingAndGlyphs">Etere</text></svg><div style="left:979.5px;top:304px;width:148.0px;height:139.5px;box-sizing:border-box;border:1px solid #e08a40"></div><div style="left:977px;top:1015px;width:943px;height:1px;background:#747376"></div><div style="left:977px;top:1016px;width:943px;height:24px;background:linear-gradient(#464548,#2e2d30)"></div><div style="left:1920px;top:23px;width:1px;height:47px;background:#f0f0f0"></div><div style="left:1920px;top:70px;width:1px;height:55px;background:#4a6a88"></div><div style="left:1920px;top:125px;width:1px;height:915px;background:#e8e8ea"></div><div style="left:0px;top:1040px;width:1921px;height:4px;background:#0b0f19"></div><div style="left:48px;top:1040px;width:344px;height:4px;background:#f0f0f0"></div>
<span style="left:23.09px;top:6.47px;font-size:11.38px;font-weight:400;font-style:normal;color:#000000;">Etere Graphics Editor</span><span style="left:7.26px;top:41.43px;font-size:18.39px;font-weight:700;font-style:normal;color:#f0f0f0;">Graphics editor</span><span style="left:158.24px;top:40.02px;font-size:18.88px;font-weight:400;font-style:normal;color:#eeeeee;">Scene editor</span><span style="left:997.50px;top:45.33px;font-size:13.78px;font-weight:400;font-style:normal;color:#e8e8e8;">Video Format</span><span style="left:1181.39px;top:42.06px;font-size:13.87px;font-weight:400;font-style:normal;color:#f4f4f4;">HD1080-50i HDYC 1920x1080@25.00iT 16:9</span><span style="left:28.96px;top:90.56px;font-size:11.98px;font-weight:700;font-style:normal;color:#f2f2f2;">Search</span><span style="left:110.70px;top:89.47px;font-size:13.26px;font-weight:700;font-style:normal;color:#f2f2f2;">New</span><span style="left:374.26px;top:90.53px;font-size:12.01px;font-weight:700;font-style:normal;color:#8c8b8e;">Save</span><span style="left:438.00px;top:90.16px;font-size:12.45px;font-weight:700;font-style:normal;color:#8c8b8e;">Cancel</span><span style="left:944.61px;top:89.61px;font-size:13.11px;font-weight:700;font-style:normal;color:#f0f0f0;">689</span><span style="left:1005.73px;top:89.80px;font-size:12.88px;font-weight:700;font-style:normal;color:#f4f4f4;">Remove</span><span style="left:1097.26px;top:90.42px;font-size:12.14px;font-weight:700;font-style:normal;color:#f4f4f4;">Select</span><span style="left:1149.60px;top:89.62px;font-size:13.09px;font-weight:400;font-style:normal;color:#ececec;">Add element:</span><span style="left:1259.87px;top:89.52px;font-size:13.21px;font-weight:700;font-style:normal;color:#f4f4f4;">Text</span><span style="left:1321.71px;top:89.58px;font-size:13.14px;font-weight:700;font-style:normal;color:#f4f4f4;">File</span><span style="left:1379.75px;top:90.21px;font-size:12.39px;font-weight:700;font-style:normal;color:#f4f4f4;">Shape</span><span style="left:1453.68px;top:90.25px;font-size:12.34px;font-weight:700;font-style:normal;color:#f4f4f4;">Ticker</span><span style="left:1835.97px;top:89.85px;font-size:12.82px;font-weight:400;font-style:normal;color:#ececec;">Preview:</span><span style="left:8.74px;top:129.98px;font-size:12.79px;font-weight:400;font-style:normal;color:#e6e6e6;">Type</span><span style="left:88.62px;top:127.79px;font-size:12.29px;font-weight:400;font-style:normal;color:#ececec;">ETX GRAPHICS</span><span style="left:2.30px;top:159.11px;font-size:12.86px;font-weight:400;font-style:normal;color:#d8d8d8;">Asset</span><span style="left:5.87px;top:183.14px;font-size:13.31px;font-weight:400;font-style:normal;color:#f0f0f0;">etere_etxg</span><span style="left:5.87px;top:207.24px;font-size:13.31px;font-weight:400;font-style:normal;color:#f0f0f0;">etere_graphics</span><span style="left:5.59px;top:232.07px;font-size:13.50px;font-weight:400;font-style:normal;color:#f0f0f0;">ipsum</span><span style="left:5.33px;top:257.53px;font-size:13.31px;font-weight:400;font-style:normal;color:#f0f0f0;">NUNZIO GRAPHIC</span><span style="left:6.27px;top:282.57px;font-size:13.50px;font-weight:400;font-style:normal;color:#f0f0f0;">testgra</span><span style="left:353.40px;top:130.11px;font-size:12.86px;font-weight:400;font-style:normal;color:#e8e8e8;">Asset</span><span style="left:434.07px;top:126.92px;font-size:13.33px;font-weight:400;font-style:normal;color:#e8e8e8;">etere_etxg</span><span style="left:352.32px;top:160.99px;font-size:13.48px;font-weight:400;font-style:normal;color:#e8e8e8;">Project</span><span style="left:434.00px;top:157.05px;font-size:14.11px;font-weight:400;font-style:normal;color:#e8e8e8;">\\vm-giacomot-w10\ETXDB\CG\689\689.ml-cgc</span><span style="left:370.37px;top:194.64px;font-size:14.12px;font-weight:400;font-style:normal;color:#e8e8e8;">Not Ok to broadcast</span><span style="left:352.24px;top:230.49px;font-size:14.55px;font-weight:400;font-style:normal;color:#e8e8e8;">Duration</span><span style="left:451.57px;top:229.55px;font-size:14.12px;font-weight:400;font-style:normal;color:#e8e8e8;">Manual</span><span style="left:637.19px;top:231.35px;font-size:13.52px;font-weight:400;font-style:normal;color:#6a696c;">00:00:00.01</span><span style="left:353.03px;top:278.37px;font-size:13.74px;font-weight:400;font-style:normal;color:#e8e8e8;">Thumbnail</span><span style="left:673.10px;top:277.49px;font-size:13.59px;font-weight:400;font-style:normal;color:#e8e8e8;">Acquire</span><span style="left:681.17px;top:321.27px;font-size:12.68px;font-weight:400;font-style:normal;color:#e8e8e8;">Clear</span><span style="left:373.63px;top:414.87px;font-size:12.91px;font-weight:700;font-style:normal;color:#f0f0f0;">Bring Up</span><span style="left:459.74px;top:414.82px;font-size:12.98px;font-weight:700;font-style:normal;color:#f0f0f0;">Send Down</span><span style="left:350.15px;top:437.09px;font-size:15.01px;font-weight:400;font-style:normal;color:#d8d8d8;">Item</span><span style="left:500.97px;top:438.66px;font-size:13.16px;font-weight:400;font-style:normal;color:#d8d8d8;">Show</span><span style="left:374.14px;top:461.16px;font-size:14.34px;font-weight:400;font-style:normal;color:#f0f0f0;">image-000</span><span style="left:504.98px;top:464.60px;font-size:13.00px;font-weight:400;font-style:normal;color:#f0f0f0;">Show</span><span style="left:562.06px;top:579.42px;font-size:16.04px;font-weight:700;font-style:normal;color:#f4f4f4;">General</span><span style="left:351.87px;top:612.56px;font-size:14.11px;font-weight:400;font-style:normal;color:#e8e8e8;">Name</span><span style="left:479.14px;top:610.84px;font-size:14.37px;font-weight:400;font-style:normal;color:#e8e8e8;">image-000</span><span style="left:351.87px;top:649.36px;font-size:14.10px;font-weight:400;font-style:normal;color:#e8e8e8;">Location</span><span style="left:482.08px;top:649.15px;font-size:14.00px;font-weight:400;font-style:normal;color:#e8e8e8;">0</span><span style="left:565.72px;top:649.65px;font-size:14.00px;font-weight:400;font-style:normal;color:#e8e8e8;">X</span><span style="left:681.80px;top:649.15px;font-size:14.00px;font-weight:400;font-style:normal;color:#e8e8e8;">6</span><span style="left:765.52px;top:649.65px;font-size:14.00px;font-weight:400;font-style:normal;color:#e8e8e8;">Y</span><span style="left:352.45px;top:687.90px;font-size:13.70px;font-weight:400;font-style:normal;color:#e8e8e8;">Size</span><span style="left:481.56px;top:686.98px;font-size:14.79px;font-weight:400;font-style:normal;color:#e8e8e8;">305</span><span style="left:566.00px;top:687.11px;font-size:14.64px;font-weight:400;font-style:normal;color:#e8e8e8;">Width</span><span style="left:681.76px;top:687.03px;font-size:14.73px;font-weight:400;font-style:normal;color:#e8e8e8;">258</span><span style="left:764.84px;top:687.25px;font-size:14.47px;font-weight:400;font-style:normal;color:#e8e8e8;">Height</span><span style="left:352.42px;top:728.62px;font-size:13.44px;font-weight:400;font-style:normal;color:#e8e8e8;">Back color</span><span style="left:545.23px;top:727.43px;font-size:13.43px;font-weight:400;font-style:normal;color:#f4f4f4;">Black</span><span style="left:660.50px;top:726.93px;font-size:13.08px;font-weight:400;font-style:normal;color:#e8e8e8;">Alpha</span><span style="left:709.08px;top:725.65px;font-size:14.00px;font-weight:400;font-style:normal;color:#e8e8e8;">0</span><span style="left:577.23px;top:764.69px;font-size:16.19px;font-weight:700;font-style:normal;color:#f4f4f4;">File</span><span style="left:351.93px;top:831.68px;font-size:13.38px;font-weight:400;font-style:normal;color:#e8e8e8;">File</span><span style="left:479.40px;top:830.65px;font-size:14.00px;font-weight:400;font-style:normal;color:#e8e8e8;">\\vm-giacomot-w10\ETXDB\CG\689\etere pte ltd_S</span><span style="left:815.63px;top:832.53px;font-size:14.50px;font-weight:700;font-style:normal;color:#f4f4f4;">...</span><span style="left:981.46px;top:1022.24px;font-size:13.53px;font-weight:400;font-style:normal;color:#e4e4e4;">Size: 1920x1080</span><span style="left:1098.99px;top:1022.27px;font-size:13.50px;font-weight:400;font-style:normal;color:#e4e4e4;">(Zoom: 49%)</span><span style="left:1193.73px;top:1022.07px;font-size:13.74px;font-weight:400;font-style:normal;color:#e4e4e4;">X: 1808 Y: 674</span>
</body></html>
